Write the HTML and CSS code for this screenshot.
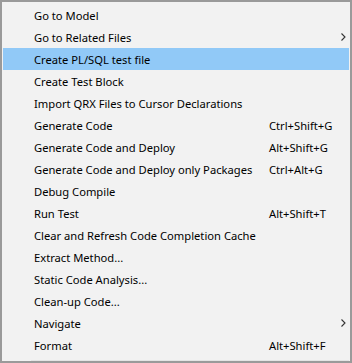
FILE: index.html
```html
<!DOCTYPE html>
<html lang="en">
<head>
  <meta charset="UTF-8">
  <title>Context Menu</title>
  <link rel="stylesheet" href="styles.css">
</head>
<body>
  <div class="menu">
    <div class="menu-item"><span class="label">Go to Model</span></div>
    <div class="menu-item"><span class="label">Go to Related Files</span><span class="shortcut"></span><svg class="arrow" width="5" height="8" viewBox="0 0 5 8"><path d="M0.5 0.5 L4 4 L0.5 7.5" fill="none" stroke="#333" stroke-width="1.1"/></svg></div>
    <div class="menu-item active"><span class="label">Create PL/SQL test file</span></div>
    <div class="menu-item"><span class="label">Create Test Block</span></div>
    <div class="menu-item"><span class="label">Import QRX Files to Cursor Declarations</span></div>
    <div class="menu-item"><span class="label">Generate Code</span><span class="shortcut">Ctrl+Shift+G</span></div>
    <div class="menu-item"><span class="label">Generate Code and Deploy</span><span class="shortcut">Alt+Shift+G</span></div>
    <div class="menu-item"><span class="label">Generate Code and Deploy only Packages</span><span class="shortcut">Ctrl+Alt+G</span></div>
    <div class="menu-item"><span class="label">Debug Compile</span></div>
    <div class="menu-item"><span class="label">Run Test</span><span class="shortcut">Alt+Shift+T</span></div>
    <div class="menu-item"><span class="label">Clear and Refresh Code Completion Cache</span></div>
    <div class="menu-item"><span class="label">Extract Method...</span></div>
    <div class="menu-item"><span class="label">Static Code Analysis...</span></div>
    <div class="menu-item"><span class="label">Clean-up Code...</span></div>
    <div class="menu-item"><span class="label">Navigate</span><span class="shortcut"></span><svg class="arrow" width="5" height="8" viewBox="0 0 5 8"><path d="M0.5 0.5 L4 4 L0.5 7.5" fill="none" stroke="#333" stroke-width="1.1"/></svg></div>
    <div class="menu-item"><span class="label">Format</span><span class="shortcut">Alt+Shift+F</span></div>
    <div class="separator"></div>
  </div>
</body>
</html>
```

FILE: styles.css
```css
body {
  margin: 0;
  background: #f2f2f2;
}

.menu {
  width: 352px;
  height: 363px;
  box-sizing: border-box;
  border: 2px solid #9a9a9a;
  background: #f2f2f2;
  padding: 2px 1px 0 1px;
  display: flex;
  flex-direction: column;
  font-family: "Noto Sans", "Liberation Sans", sans-serif;
  font-size: 11.2px;
  color: #000;
}

.menu-item {
  height: 22px;
  display: grid;
  grid-template-columns: 31px 1fr 67px 13px;
  align-items: center;
  white-space: nowrap;
}

.menu-item .label {
  grid-column: 2;
}

.menu-item .shortcut {
  grid-column: 3;
}

.menu-item .arrow {
  grid-column: 4;
  margin-left: 5px;
  margin-top: -1px;
}

.menu-item.active {
  background: #91c9f7;
}

.separator {
  margin: 4px 0 0 28px;
  height: 1px;
  background: #e4e4e4;
}
```
